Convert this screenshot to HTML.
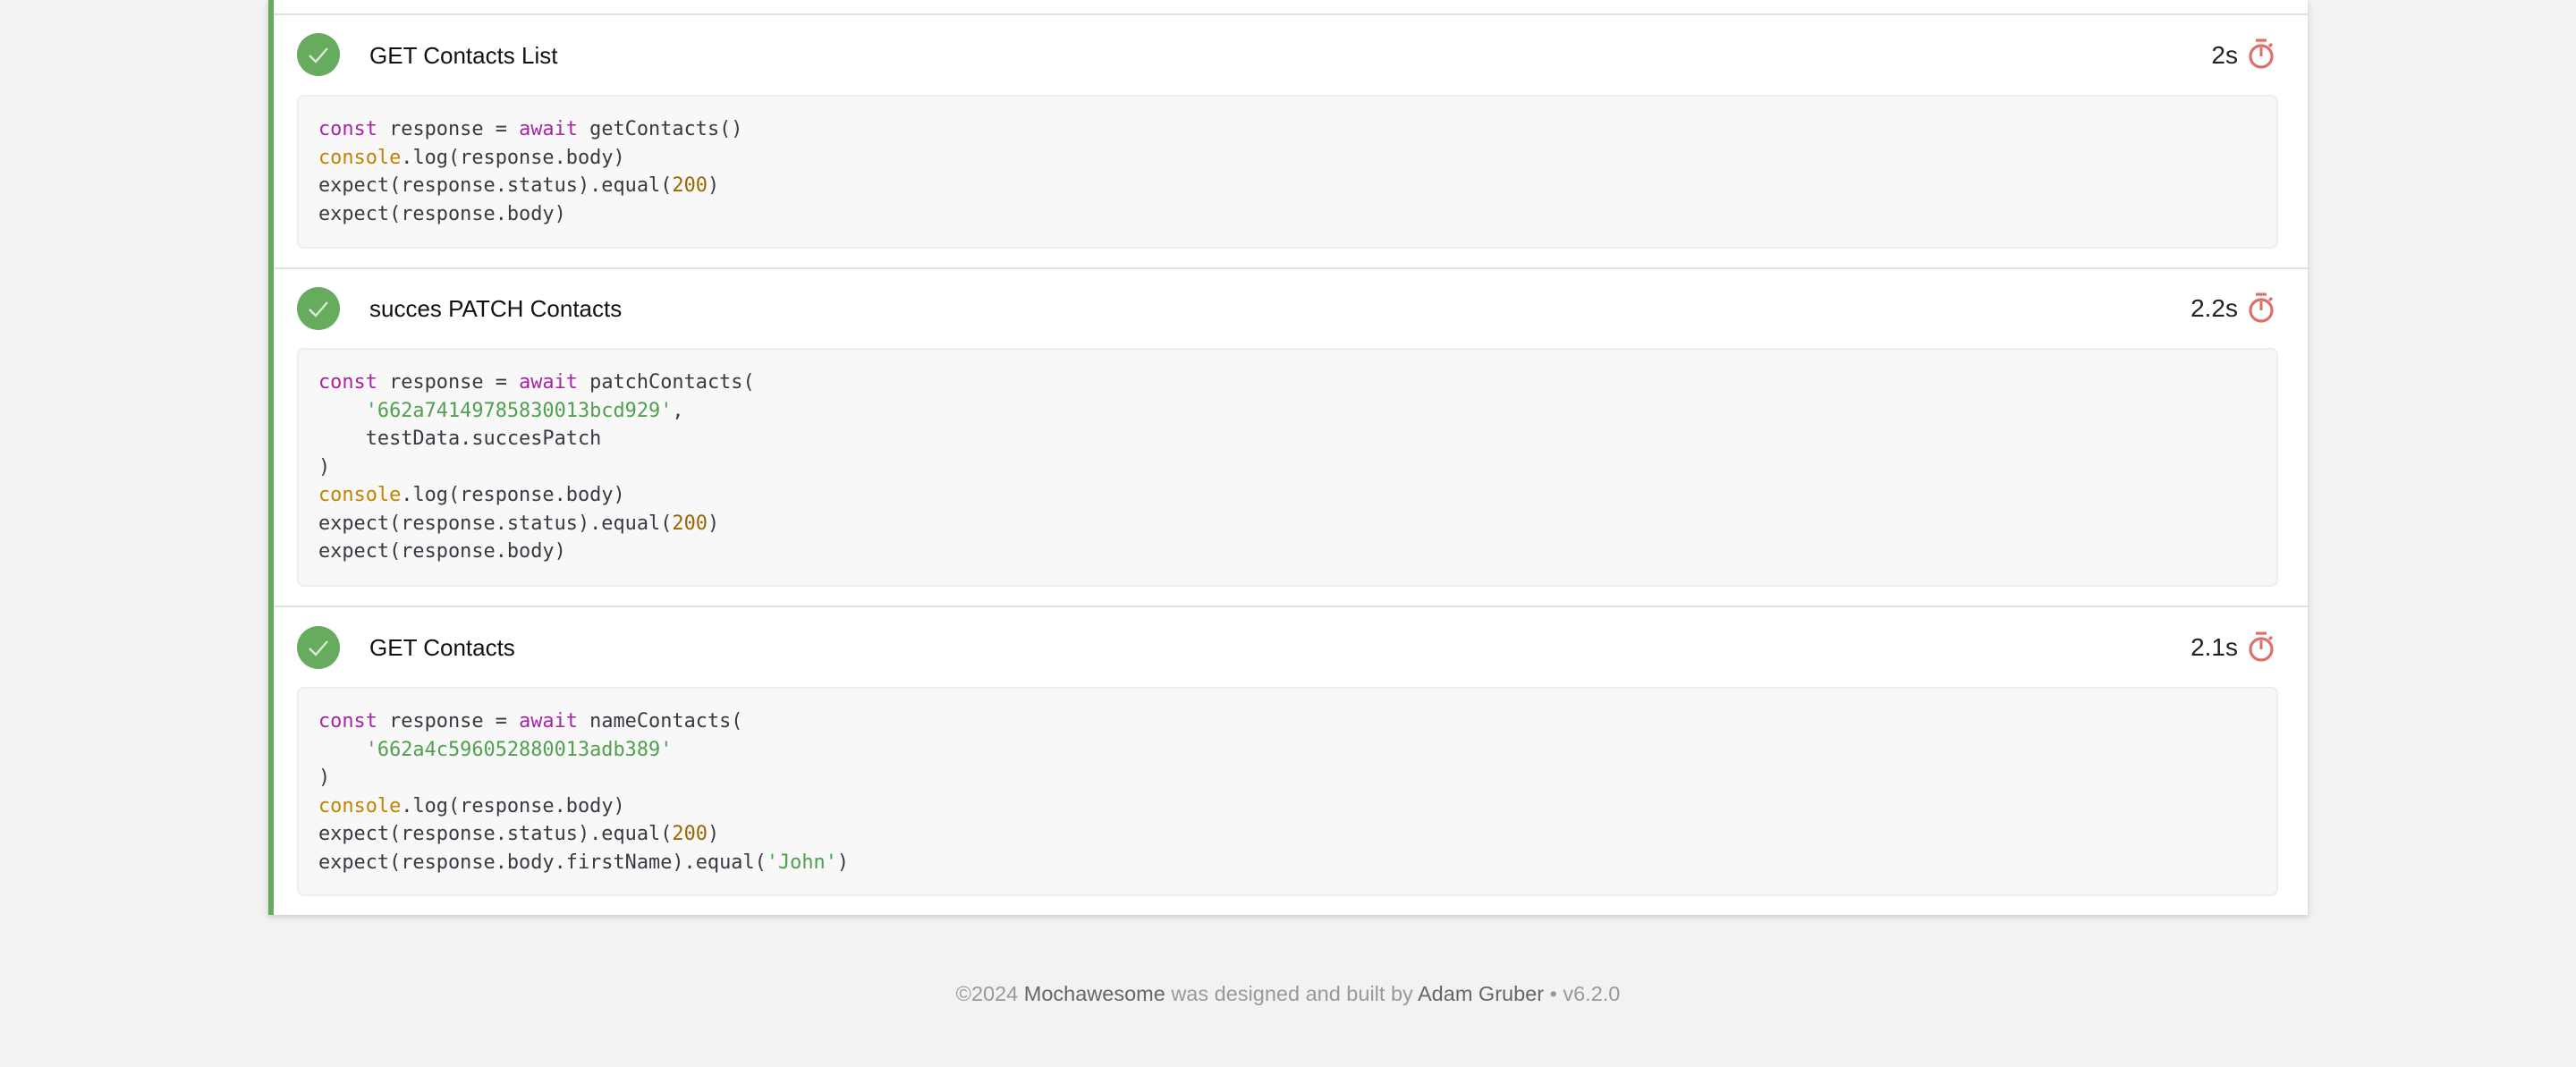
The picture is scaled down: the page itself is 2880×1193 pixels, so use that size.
<!DOCTYPE html>
<html><head><meta charset="utf-8"><style>
html,body{margin:0;padding:0;}
body{width:2880px;height:1193px;background:#f2f2f2;position:relative;overflow:hidden;font-family:"Liberation Sans",sans-serif;}
.card{position:absolute;left:300px;top:0;width:2280px;height:1023px;background:#fff;box-shadow:0 2px 6px rgba(0,0,0,.18);border-left:6px solid #66ab5e;box-sizing:border-box;}
.sep{position:absolute;left:0;right:0;height:2px;background:#e2e2e2;}
.chk{position:absolute;left:26px;width:48px;height:48px;border-radius:50%;background:#66ab5e;}
.chk svg{position:absolute;left:0;top:0;}
.title{position:absolute;left:107px;font-size:26px;color:#111;line-height:30px;}
.dur{position:absolute;right:78px;font-size:28px;color:#222;line-height:30px;}
.sw{position:absolute;right:34px;}
.code{position:absolute;left:26px;width:2215px;background:#f8f8f8;border:2px solid #eeeeee;border-radius:8px;box-sizing:border-box;padding:21px 22px;font-family:"DejaVu Sans Mono","Liberation Mono",monospace;font-size:21.9px;line-height:31.5px;color:#383a42;white-space:pre;}
.k{color:#a626a4}.c{color:#c18401}.n{color:#986801}.s{color:#50a14f}
.foot{position:absolute;left:0;width:2880px;top:1096px;text-align:center;font-size:23.5px;color:#999;line-height:30px;}
.foot b{font-weight:normal;color:#666}
</style></head><body>
<svg width="0" height="0" style="position:absolute"><defs>
<g id="swg"><circle cx="16" cy="21" r="12" fill="none" stroke="#dc716c" stroke-width="3.2"/><rect x="10" y="1.5" width="12" height="3.2" fill="#dc716c"/><rect x="14.5" y="11" width="3" height="10" fill="#dc716c"/><path d="M25 10 L28 7" stroke="#dc716c" stroke-width="3.2"/></g>
</defs></svg>
<div class="card">
 <div class="sep" style="top:15px"></div>
 <div class="chk" style="top:37px"><svg width="48" height="48"><path d="M14 25 L21 32 L34 17" fill="none" stroke="#d8ecd5" stroke-width="2.4"/></svg></div>
 <div class="title" style="top:47px">GET Contacts List</div>
 <div class="dur" style="top:47px">2s</div>
 <svg class="sw" style="top:42px" width="34" height="36" viewBox="0 0 34 36"><use href="#swg"/></svg>
 <div class="code" style="top:106px;height:172px"><span class="k">const</span> response = <span class="k">await</span> getContacts()
<span class="c">console</span>.log(response.body)
expect(response.status).equal(<span class="n">200</span>)
expect(response.body)</div>

 <div class="sep" style="top:299px"></div>
 <div class="chk" style="top:321px"><svg width="48" height="48"><path d="M14 25 L21 32 L34 17" fill="none" stroke="#d8ecd5" stroke-width="2.4"/></svg></div>
 <div class="title" style="top:330px">succes PATCH Contacts</div>
 <div class="dur" style="top:330px">2.2s</div>
 <svg class="sw" style="top:326px" width="34" height="36" viewBox="0 0 34 36"><use href="#swg"/></svg>
 <div class="code" style="top:389px;height:267px"><span class="k">const</span> response = <span class="k">await</span> patchContacts(
    <span class="s">'662a74149785830013bcd929'</span>,
    testData.succesPatch
)
<span class="c">console</span>.log(response.body)
expect(response.status).equal(<span class="n">200</span>)
expect(response.body)</div>

 <div class="sep" style="top:677px"></div>
 <div class="chk" style="top:700px"><svg width="48" height="48"><path d="M14 25 L21 32 L34 17" fill="none" stroke="#d8ecd5" stroke-width="2.4"/></svg></div>
 <div class="title" style="top:709px">GET Contacts</div>
 <div class="dur" style="top:709px">2.1s</div>
 <svg class="sw" style="top:705px" width="34" height="36" viewBox="0 0 34 36"><use href="#swg"/></svg>
 <div class="code" style="top:768px;height:234px"><span class="k">const</span> response = <span class="k">await</span> nameContacts(
    <span class="s">'662a4c596052880013adb389'</span>
)
<span class="c">console</span>.log(response.body)
expect(response.status).equal(<span class="n">200</span>)
expect(response.body.firstName).equal(<span class="s">'John'</span>)</div>
</div>
<div class="foot">©2024 <b>Mochawesome</b> was designed and built by <b>Adam Gruber</b> • v6.2.0</div>
</body></html>
